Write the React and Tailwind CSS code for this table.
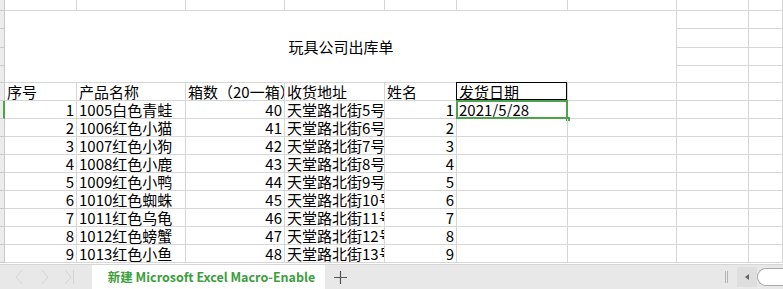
const rows = [
  ["1005白色青蛙", 40],
  ["1006红色小猫", 41],
  ["1007红色小狗", 42],
  ["1008红色小鹿", 43],
  ["1009红色小鸭", 44],
  ["1010红色蜘蛛", 45],
  ["1011红色乌龟", 46],
  ["1012红色螃蟹", 47],
  ["1013红色小鱼", 48],
];

const cell = "border-r border-b border-[#d6d6d6] overflow-hidden whitespace-nowrap px-[2px] leading-[18px]";
const strip = "border-r border-b border-[#c9c9c9] bg-[#ececec]";

export default function App() {
  return (
    <div className="w-[783px] h-[289px] overflow-hidden bg-white text-black text-[15px] font-['Noto_Sans_CJK_SC',sans-serif]">
      <div className="grid grid-cols-[5px_72px_109px_99px_100px_72px_111px_109px_72px_1fr] grid-rows-[11px_18px_19px_18px_17px_18px_repeat(9,18px)] h-[264px]">
        {/* partial row above */}
        <div className={strip} />
        {Array.from({ length: 9 }).map((_, i) => (
          <div key={"t" + i} className={cell} />
        ))}

        {/* title block: 4 rows in strip */}
        <div className={strip} />
        <div className={`${cell} col-span-7 row-span-4 flex items-center justify-center`}>
          <span className="pl-[1px]">玩具公司出库单</span>
        </div>
        <div className={cell} />
        <div className={cell} />
        {[0, 1, 2].map((r) => (
          <div key={"r" + r} className="contents">
            <div className={strip} />
            <div className={cell} />
            <div className={cell} />
          </div>
        ))}

        {/* header row */}
        <div className={strip} />
        <div className={cell}>序号</div>
        <div className={cell}>产品名称</div>
        <div className={cell}>箱数（20一箱）</div>
        <div className={cell}>收货地址</div>
        <div className={cell}>姓名</div>
        <div className={`${cell} relative overflow-visible`}>
          <div className="absolute left-[-1px] top-[-1px] right-0 bottom-0 border border-black pointer-events-none" />
          发货日期
        </div>
        <div className={cell} />
        <div className={cell} />
        <div className={cell} />

        {rows.map(([name, qty], i) => (
          <div key={i} className="contents">
            <div className={i === 0 ? "border-b border-[#c9c9c9] bg-[#ececec] border-r-2 border-r-[#4aa54a]" : strip} />
            <div className={`${cell} text-right`}>{i + 1}</div>
            <div className={cell}>{name}</div>
            <div className={`${cell} text-right`}>{qty}</div>
            <div className={`${cell} pr-0`}>天堂路北街{i + 5}号</div>
            <div className={`${cell} text-right`}>{i + 1}</div>
            <div className={`${cell} relative overflow-visible`}>
              {i === 0 && (
                <>
                  <div className="absolute left-[-1px] top-[-1px] right-[-1px] bottom-[-1px] border-2 border-[#4aa54a] pointer-events-none" />
                  <div className="absolute right-[-3px] bottom-[-3px] w-[4px] h-[4px] bg-[#4aa54a]" />
                  2021/5/28
                </>
              )}
            </div>
            <div className={cell} />
            <div className={cell} />
            <div className={cell} />
          </div>
        ))}
      </div>

      {/* sheet tab bar */}
      <div className="flex h-[25px] bg-[#e8e8e8] border-t border-[#d6d6d6] items-stretch">
        <div className="w-[92px] flex items-center pl-[15px]">
          <svg width="60" height="16" viewBox="0 0 60 16" fill="none" stroke="#d4d4d4" strokeWidth="1">
            <path d="M7 1L1 8l6 7" />
            <path d="M27 1l6 7-6 7" />
            <path d="M50 1l6 7-6 7M58.5 1v14" />
          </svg>
        </div>
        <div className="w-[233px] bg-white flex items-center justify-center pl-[6px] text-[12.5px] font-bold text-[#3c9e3c]">
          新建 Microsoft Excel Macro-Enable
        </div>
        <div className="w-[30px] flex items-center justify-center">
          <svg width="15" height="15" viewBox="0 0 15 15">
            <path d="M7.5 1v13M1 7.5h13" stroke="#555" strokeWidth="1.2" />
          </svg>
        </div>
        <div className="flex-1" />
        <div className="w-[9px] flex items-center">
          <div className="w-[3px] h-[12px] border-x border-[#b5b5b5]" />
        </div>
        <div className="w-[20px] mt-[2px] mb-[2px] bg-[#dedede] flex items-center justify-center ml-[3px]">
          <svg width="5" height="6" viewBox="0 0 5 6">
            <path d="M4 0v6L0 3z" fill="#666" />
          </svg>
        </div>
        <div className="w-[26px] mt-[3px] mb-[3px] bg-white border border-r-0 border-[#a8a8a8] rounded-l-[10px]" />
      </div>
    </div>
  );
}
